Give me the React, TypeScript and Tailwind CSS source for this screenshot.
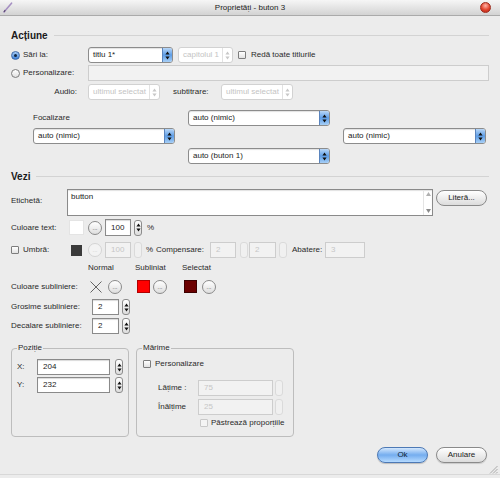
import clsx from 'clsx';

function Arrows({ color = '#111' }: { color?: string }) {
  return (
    <svg width="5" height="9" viewBox="0 0 5 9">
      <path d="M2.5 0.5 L4.6 3.6 H0.4Z M2.5 8.5 L4.6 5.4 H0.4Z" fill={color} />
    </svg>
  );
}

function Select({ w, text, disabled = false }: { w: string; text: string; disabled?: boolean }) {
  return (
    <div
      className={clsx(
        'flex h-[16px] items-stretch overflow-hidden rounded-[3px] border bg-white',
        w,
        disabled ? 'border-[#d2d2d2] text-[#c4c4c4]' : 'border-[#8c8c8c] text-[#222] shadow-[inset_0_1px_1px_rgba(0,0,0,0.12)]'
      )}
    >
      <span className="flex-1 truncate pl-[4px] leading-[14px]">{text}</span>
      <span
        className={clsx(
          'flex w-[10px] items-center justify-center border-l',
          disabled ? 'border-[#e2e2e2]' : 'border-[#5a84bd] bg-linear-to-b from-[#b9d7f7] via-[#5d9de6] to-[#a7cff6]'
        )}
      >
        <Arrows color={disabled ? '#c8c8c8' : '#111'} />
      </span>
    </div>
  );
}

function Field({ w, value = '', disabled = false, h = 'h-[16px]' }: { w: string; value?: string; disabled?: boolean; h?: string }) {
  return (
    <div
      className={clsx(
        'flex items-center border pl-[5px]',
        w,
        h,
        disabled ? 'border-[#cdcdcd] bg-[#f2f2f2] text-[#c6c6c6]' : 'border-[#8a8a8a] bg-white text-[#222] shadow-[inset_0_1px_1px_rgba(0,0,0,0.15)]'
      )}
    >
      {value}
    </div>
  );
}

function Stepper({ disabled = false }: { disabled?: boolean }) {
  return (
    <div
      className={clsx(
        'flex h-[16px] w-[8px] items-center justify-center rounded-[3px] border',
        disabled ? 'border-[#dadada] bg-[#f0f0f0]' : 'border-[#8c8c8c] bg-linear-to-b from-white to-[#dcdcdc]'
      )}
    >
      {!disabled && <Arrows />}
    </div>
  );
}

function Check({ disabled = false }: { disabled?: boolean }) {
  return (
    <div
      className={clsx(
        'h-[8px] w-[8px] shrink-0 rounded-[1px] border',
        disabled ? 'border-[#c8c8c8] bg-[#f4f4f4]' : 'border-[#7d7d7d] bg-linear-to-b from-white to-[#e2e2e2]'
      )}
    />
  );
}

function Radio({ checked = false }: { checked?: boolean }) {
  return checked ? (
    <div className="flex h-[9px] w-[9px] shrink-0 items-center justify-center rounded-full border border-[#3f6aa8] bg-linear-to-b from-[#a6cbf3] to-[#3b7fd8]">
      <div className="h-[3px] w-[3px] rounded-full bg-[#10253f]" />
    </div>
  ) : (
    <div className="h-[9px] w-[9px] shrink-0 rounded-full border border-[#7d7d7d] bg-linear-to-b from-white to-[#e0e0e0]" />
  );
}

function Dots({ disabled = false }: { disabled?: boolean }) {
  return (
    <div
      className={clsx(
        'flex h-[14px] w-[14px] shrink-0 items-center justify-center rounded-full border text-[6px] leading-none',
        disabled ? 'border-[#d4d4d4] bg-[#f3f3f3] text-[#c8c8c8]' : 'border-[#8a8a8a] bg-linear-to-b from-white to-[#dedede] text-[#444]'
      )}
    >
      ...
    </div>
  );
}

function Header({ title }: { title: string }) {
  return (
    <div className="flex h-[12px] items-center gap-[6px]">
      <span className="text-[10px] font-bold text-[#1a1a1a]">{title}</span>
      <div className="h-px flex-1 bg-[#d3d3d3]" />
    </div>
  );
}

export default function App() {
  return (
    <div className="relative flex h-[478px] w-[500px] flex-col overflow-hidden bg-[#ececec] font-['Liberation_Sans',Arial,sans-serif] text-[8px] text-[#2a2a2a]">
      {/* Title bar */}
      <div className="relative flex h-[16px] shrink-0 items-center justify-center border-b border-[#aaaaaa] bg-linear-to-b from-[#f6f6f6] to-[#d3d3d3]">
        <svg className="absolute left-[3px] top-[2px]" width="10" height="11" viewBox="0 0 10 11">
          <path d="M1 10 L8.5 1.2" stroke="#a58fc2" strokeWidth="1.6" strokeLinecap="round" />
          <path d="M1 10 L2.2 8.2" stroke="#5b4a70" strokeWidth="1.2" />
        </svg>
        <span className="text-[8px] text-[#222]">Proprietăți - buton 3</span>
        <div className="absolute right-[9px] top-[2px] h-[11px] w-[11px] rounded-full border border-[#9c2a1c] bg-[radial-gradient(circle_at_50%_30%,#ffb3a6,#e2432c_55%,#b3261a)]" />
      </div>

      <div className="flex flex-col px-[11px]">
        <div className="mt-[13px]">
          <Header title="Acțiune" />
        </div>

        {/* Sări la */}
        <div className="mt-[6px] flex h-[16px] items-center">
          <div className="flex w-[77px] items-center gap-[3px]">
            <Radio checked />
            <span>Sări la:</span>
          </div>
          <Select w="w-[85px]" text="titlu 1*" />
          <div className="ml-[5px]">
            <Select w="w-[55px]" text="capitolul 1" disabled />
          </div>
          <div className="ml-[5px]">
            <Check />
          </div>
          <span className="ml-[5px]">Redă toate titlurile</span>
        </div>

        {/* Personalizare */}
        <div className="mt-[2px] flex h-[16px] items-center">
          <div className="flex w-[77px] items-center gap-[3px]">
            <Radio />
            <span>Personalizare:</span>
          </div>
          <Field w="w-[401px]" disabled />
        </div>

        {/* Audio / subtitrare */}
        <div className="mt-[3px] flex h-[16px] items-center">
          <span className="w-[66px] text-right">Audio:</span>
          <div className="ml-[11px]">
            <Select w="w-[72px]" text="ultimul selectat" disabled />
          </div>
          <span className="ml-[13px] w-[48px]">subtitrare:</span>
          <Select w="w-[72px]" text="ultimul selectat" disabled />
        </div>

        {/* Focalizare */}
        <div className="mt-[10px] flex h-[16px] items-center">
          <span className="ml-[22px] w-[155px]">Focalizare</span>
          <Select w="w-[142px]" text="auto (nimic)" />
        </div>
        <div className="mt-[2px] flex h-[16px] items-center">
          <div className="ml-[22px]">
            <Select w="w-[142px]" text="auto (nimic)" />
          </div>
          <div className="ml-[168px]">
            <Select w="w-[143px]" text="auto (nimic)" />
          </div>
        </div>
        <div className="mt-[4px] flex h-[16px] items-center">
          <div className="ml-[177px]">
            <Select w="w-[142px]" text="auto (buton 1)" />
          </div>
        </div>

        <div className="mt-[6px]">
          <Header title="Vezi" />
        </div>

        {/* Etichetă */}
        <div className="mt-[7px] flex h-[27px] items-start">
          <span className="w-[56px] pt-[6px]">Etichetă:</span>
          <div className="flex h-[27px] w-[366px] border border-[#8a8a8a] bg-white shadow-[inset_0_1px_1px_rgba(0,0,0,0.12)]">
            <span className="flex-1 pl-[3px] pt-[1px] text-[#222]">button</span>
            <div className="flex w-[9px] flex-col items-center justify-between border-l border-[#e4e4e4] py-[2px]">
              <svg width="5" height="4" viewBox="0 0 5 4"><path d="M2.5 0 L5 4 H0Z" fill="#b0b0b0" /></svg>
              <svg width="5" height="4" viewBox="0 0 5 4"><path d="M2.5 4 L5 0 H0Z" fill="#8a8a8a" /></svg>
            </div>
          </div>
          <div className="ml-[3px] mt-[1px] flex h-[16px] w-[51px] items-center justify-center rounded-full border border-[#8a8a8a] bg-linear-to-b from-white to-[#dcdcdc] text-[#222]">
            Literă...
          </div>
        </div>

        {/* Culoare text */}
        <div className="mt-[3px] flex h-[17px] items-center">
          <span className="w-[58px]">Culoare text:</span>
          <div className="h-[15px] w-[15px] border border-[#e4e4e4] bg-white" />
          <div className="ml-[4px]">
            <Dots />
          </div>
          <div className="ml-[3px]">
            <Field w="w-[26px]" h="h-[17px]" value="100" />
          </div>
          <div className="ml-[3px]">
            <Stepper />
          </div>
          <span className="ml-[5px]">%</span>
        </div>

        {/* Umbră */}
        <div className="mt-[6px] flex h-[16px] items-center">
          <Check />
          <span className="ml-[4px] w-[48px]">Umbră:</span>
          <div className="h-[11px] w-[11px] bg-[#3a3a3a]" />
          <div className="ml-[6px]">
            <Dots disabled />
          </div>
          <div className="ml-[3px]">
            <Field w="w-[26px]" value="100" disabled />
          </div>
          <div className="ml-[3px]">
            <Stepper disabled />
          </div>
          <span className="ml-[4px] w-[10px]">%</span>
          <span className="w-[54px]">Compensare:</span>
          <Field w="w-[26px]" value="2" disabled />
          <div className="ml-[4px]">
            <Stepper disabled />
          </div>
          <div className="ml-[1px]">
            <Field w="w-[27px]" value="2" disabled />
          </div>
          <div className="ml-[3px]">
            <Stepper disabled />
          </div>
          <span className="ml-[5px] w-[33px]">Abatere:</span>
          <Field w="w-[40px]" value="3" disabled />
        </div>

        {/* Column headers */}
        <div className="mt-[5px] flex h-[10px] items-center">
          <span className="ml-[77px] w-[47px]">Normal</span>
          <span className="w-[47px]">Subliniat</span>
          <span>Selectat</span>
        </div>

        {/* Culoare subliniere */}
        <div className="mt-[6px] flex h-[15px] items-center">
          <span className="w-[79px]">Culoare subliniere:</span>
          <svg width="12" height="12" viewBox="0 0 12 12">
            <path d="M0.5 0.5 L11.5 11.5 M11.5 0.5 L0.5 11.5" stroke="#555" strokeWidth="0.9" />
          </svg>
          <div className="ml-[6px]">
            <Dots />
          </div>
          <div className="ml-[15px] h-[13px] w-[13px] border border-[#b00000] bg-[#ff0000]" />
          <div className="ml-[3px]">
            <Dots />
          </div>
          <div className="ml-[17px] h-[13px] w-[13px] border border-[#3c0000] bg-[#6b0000]" />
          <div className="ml-[5px]">
            <Dots />
          </div>
        </div>

        {/* Grosime / Decalare */}
        <div className="mt-[5px] flex h-[16px] items-center">
          <span className="w-[81px]">Grosime subliniere:</span>
          <Field w="w-[27px]" value="2" />
          <div className="ml-[3px]">
            <Stepper />
          </div>
        </div>
        <div className="mt-[3px] flex h-[16px] items-center">
          <span className="w-[81px]">Decalare subliniere:</span>
          <Field w="w-[27px]" value="2" />
          <div className="ml-[3px]">
            <Stepper />
          </div>
        </div>

        {/* Group boxes */}
        <div className="mt-[9px] flex gap-[7px]">
          <fieldset className="h-[94px] w-[118px] rounded-[4px] border border-[#bdbdbd] px-[5px]">
            <legend className="px-[1px] leading-[10px]">Poziție</legend>
            <div className="mt-[6px] flex h-[16px] items-center">
              <span className="w-[20px]">X:</span>
              <Field w="w-[73px]" value="204" />
              <div className="ml-[5px]">
                <Stepper />
              </div>
            </div>
            <div className="mt-[2px] flex h-[16px] items-center">
              <span className="w-[20px]">Y:</span>
              <Field w="w-[73px]" value="232" />
              <div className="ml-[5px]">
                <Stepper />
              </div>
            </div>
          </fieldset>

          <fieldset className="h-[94px] w-[158px] rounded-[4px] border border-[#bdbdbd] px-[5px]">
            <legend className="px-[1px] leading-[10px]">Mărime</legend>
            <div className="ml-[1px] mt-[7px] flex h-[8px] items-center">
              <Check />
              <span className="ml-[4px]">Personalizare</span>
            </div>
            <div className="mt-[12px] flex h-[16px] items-center">
              <span className="ml-[16px] w-[40px]">Lățime :</span>
              <Field w="w-[75px]" value="75" disabled />
              <div className="ml-[2px]">
                <Stepper disabled />
              </div>
            </div>
            <div className="mt-[3px] flex h-[16px] items-center">
              <span className="ml-[16px] w-[40px]">Înălțime</span>
              <Field w="w-[75px]" value="25" disabled />
              <div className="ml-[2px]">
                <Stepper disabled />
              </div>
            </div>
            <div className="ml-[58px] mt-[3px] flex h-[10px] items-center">
              <Check disabled />
              <span className="ml-[3px]">Păstrează proporțiile</span>
            </div>
          </fieldset>
        </div>

        {/* Buttons */}
        <div className="mr-[2px] mt-[10px] flex h-[16px] justify-end gap-[8px]">
          <div className="flex h-[16px] w-[51px] items-center justify-center rounded-full border border-[#4d79b5] bg-linear-to-b from-[#d3e7fc] via-[#74adef] to-[#b5daff] text-[#0f1f33] shadow-[0_1px_1px_rgba(0,0,0,0.2)]">
            Ok
          </div>
          <div className="flex h-[16px] w-[51px] items-center justify-center rounded-full border border-[#8a8a8a] bg-linear-to-b from-white to-[#dcdcdc] text-[#222] shadow-[0_1px_1px_rgba(0,0,0,0.15)]">
            Anulare
          </div>
        </div>
      </div>

      {/* Resize grip */}
      <svg className="absolute bottom-[4px] right-[2px]" width="9" height="9" viewBox="0 0 9 9">
        <path d="M8.5 1 L1 8.5 M8.5 4 L4 8.5 M8.5 7 L7 8.5" stroke="#9a9a9a" strokeWidth="0.8" />
      </svg>
      <div className="absolute bottom-[3px] left-0 right-0 h-px bg-[#d8d8d8]" />
    </div>
  );
}
